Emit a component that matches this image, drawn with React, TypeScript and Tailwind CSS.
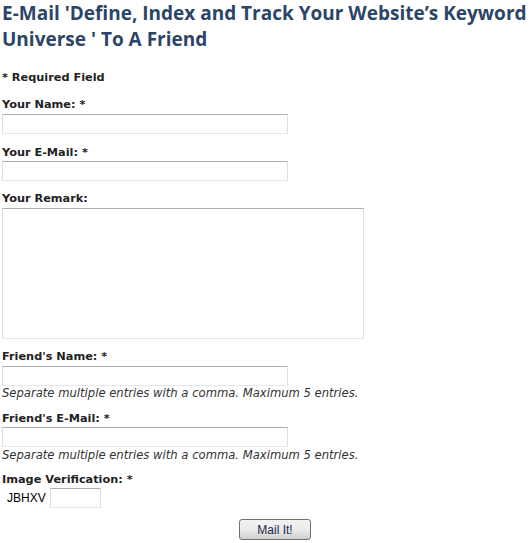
import React from "react";

const inputCls =
  "block h-[20px] border border-t-[#abadb3] border-l-[#dbdfe6] border-r-[#dbdfe6] border-b-[#e3e9ef] bg-white outline-none";

function Label({ children }: { children: React.ReactNode }) {
  return (
    <div className="text-[11.3px] font-bold leading-[14px] text-[#222]">
      {children}
    </div>
  );
}

function Help({ mt }: { mt: string }) {
  return (
    <div className={`${mt} text-[11.6px] italic leading-[14px] text-[#333]`}>
      Separate multiple entries with a comma. Maximum 5 entries.
    </div>
  );
}

export default function App() {
  return (
    <div className="w-[530px] h-[543px] bg-white font-['DejaVu_Sans',sans-serif] text-[#222] overflow-hidden">
      <h1 className="font-['Open_Sans',sans-serif] font-bold text-[19px] leading-[26px] text-[#2b4568] pl-[2px]">
        E-Mail 'Define, Index and Track Your Website’s Keyword Universe ' To A Friend
      </h1>
      <div className="pl-[2px]">
        <div className="mt-[19px]">
          <Label>* Required Field</Label>
        </div>
        <div className="mt-[13px]">
          <Label>Your Name: *</Label>
          <input className={`${inputCls} mt-[2px] w-[286px]`} />
        </div>
        <div className="mt-[12px]">
          <Label>Your E-Mail: *</Label>
          <input className={`${inputCls} mt-[1px] w-[286px]`} />
        </div>
        <div className="mt-[11px]">
          <Label>Your Remark:</Label>
          <textarea className="block mt-[2px] w-[362px] h-[131px] resize-none border border-t-[#abadb3] border-l-[#dbdfe6] border-r-[#dbdfe6] border-b-[#e3e9ef] outline-none" />
        </div>
        <div className="mt-[11px]">
          <Label>Friend's Name: *</Label>
          <input className={`${inputCls} mt-[2px] w-[286px]`} />
          <Help mt="mt-0" />
        </div>
        <div className="mt-[12px]">
          <Label>Friend's E-Mail: *</Label>
          <input className={`${inputCls} mt-[1px] w-[286px]`} />
          <Help mt="mt-[1px]" />
        </div>
        <div className="mt-[11px]">
          <Label>Image Verification: *</Label>
          <div className="flex items-center mt-[1px]">
            <span className="font-['Liberation_Sans',sans-serif] text-[12px] text-black ml-[5px] mr-[4px]">
              JBHXV
            </span>
            <input className={`${inputCls} w-[51px]`} />
          </div>
        </div>
        <div className="flex justify-center mt-[11px] pl-[18px]">
          <button className="h-[21px] w-[72px] rounded-[3px] border border-[#707070] bg-gradient-to-b from-[#f2f2f2] via-[#ebebeb] to-[#cfcfcf] font-['Liberation_Sans',sans-serif] text-[12px] text-[#1c2a4a] leading-none">
            Mail It!
          </button>
        </div>
      </div>
    </div>
  );
}
